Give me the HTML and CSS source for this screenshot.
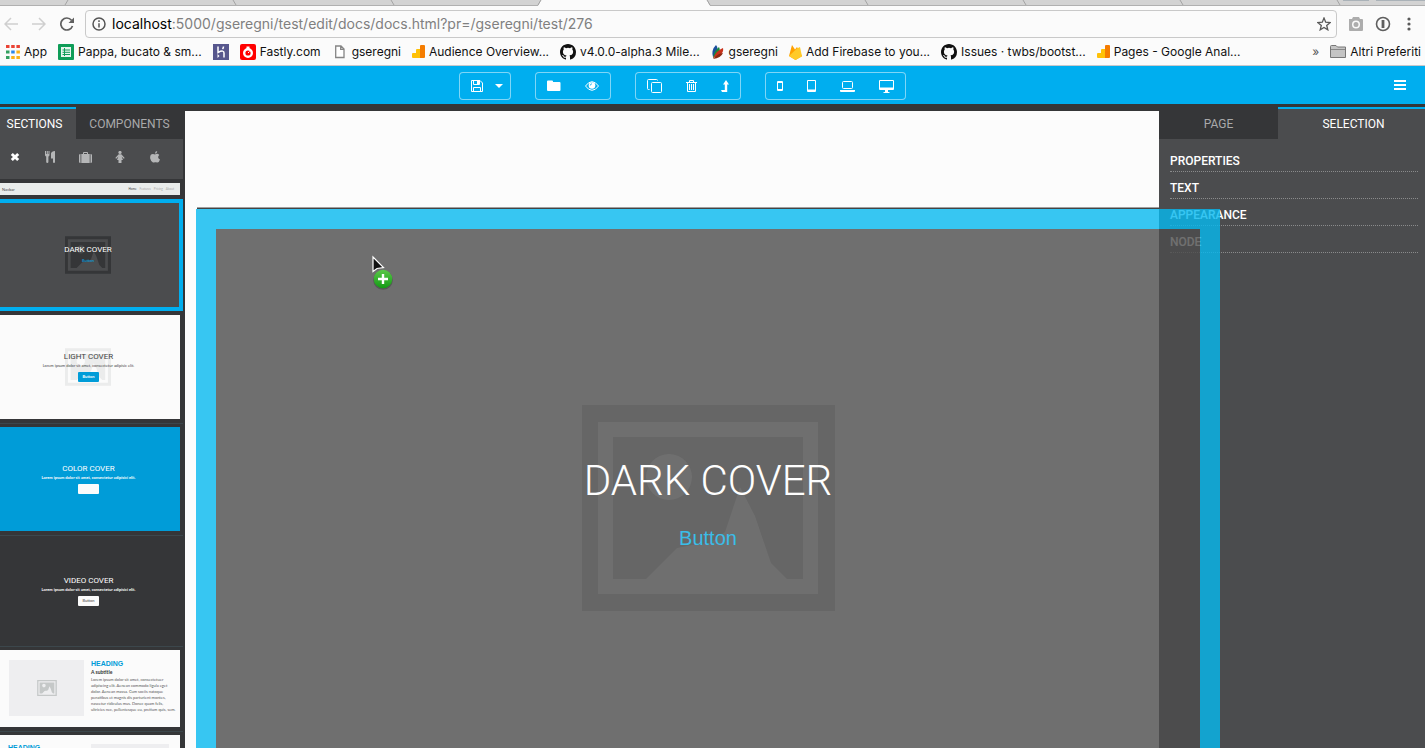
FILE: index.html
```html
<!DOCTYPE html>
<html lang="en">
<head>
<meta charset="utf-8">
<title>docs.html</title>
<link rel="stylesheet" href="styles.css">
</head>
<body>
<svg class="defs" aria-hidden="true">
  <symbol id="picture" viewBox="0 0 253 206"><path fill="currentColor" fill-rule="evenodd" d="M0 0H253V206H0ZM16 17V189H236V17ZM31 32H221V174H205L189 158L173 111L158 82L143 127L128 138L110 140L95 143L64 174H31ZM64 72A23 23 0 1 0 110 72A23 23 0 1 0 64 72Z"/></symbol>
  <symbol id="github" viewBox="0 0 16 16"><path fill="#111" d="M8 0C3.58 0 0 3.58 0 8c0 3.54 2.29 6.53 5.47 7.59.4.07.55-.17.55-.38 0-.19-.01-.82-.01-1.49-2.01.37-2.53-.49-2.69-.94-.09-.23-.48-.94-.82-1.13-.28-.15-.68-.52-.01-.53.63-.01 1.08.58 1.23.82.72 1.21 1.87.87 2.33.66.07-.52.28-.87.51-1.07-1.78-.2-3.64-.89-3.64-3.95 0-.87.31-1.59.82-2.15-.08-.2-.36-1.02.08-2.12 0 0 .67-.21 2.2.82a7.5 7.5 0 0 1 4 0c1.53-1.04 2.2-.82 2.2-.82.44 1.1.16 1.92.08 2.12.51.56.82 1.27.82 2.15 0 3.07-1.87 3.75-3.65 3.95.29.25.54.73.54 1.48 0 1.07-.01 1.93-.01 2.2 0 .21.15.46.55.38A8.01 8.01 0 0 0 16 8c0-4.42-3.58-8-8-8z"/></symbol>
  <symbol id="analytics" viewBox="0 0 13 13"><path fill="#ffc107" d="M0 9Q0 8 1 8H4V5Q4 4 5 4H8V13H1Q0 13 0 12Z"/><path fill="#f57c00" d="M8 1Q8 0 9 0H12Q13 0 13 1V12Q13 13 12 13H8Z"/></symbol>
</svg>

<div class="browser">
  <svg class="tabstrip" viewBox="0 0 1425 6" preserveAspectRatio="none" aria-hidden="true">
    <rect width="1425" height="6" fill="#d3d3d3"/>
    <path d="M0 5.500H538L541 0M707 0L710 5.500H1425" fill="none" stroke="#b0b0b0"/>
    <path d="M538 6L541 0H707L710 6Z" fill="#fbfbfb"/>
    <path d="M65 5L68 0M233 0L236 5M391 0L394 5M538 5L541 0M707 0L710 5M865 0L868 5M1023 0L1026 5M1180 0L1183 5M1337 0L1340 5" fill="none" stroke="#a4a4a4"/>
    <path d="M1343 0.500H1369M1376 0.500H1425" stroke="#aab2b8"/>
  </svg>
  <div class="address-row">
    <div class="history">
      <button class="bare" aria-label="Back"><svg width="14" height="14" viewBox="0 0 14 14" fill="none" stroke="#cfcfcf" stroke-width="1.500"><path d="M14 7H1.500M7 1L1 7L7 13"/></svg></button>
      <button class="bare" aria-label="Forward"><svg width="14" height="14" viewBox="0 0 14 14" fill="none" stroke="#cfcfcf" stroke-width="1.500"><path d="M0 7H12.500M7 1L13 7L7 13"/></svg></button>
      <button class="bare" aria-label="Reload"><svg width="14" height="14" viewBox="0 0 14 14"><path d="M12.500 9A6 6 0 1 1 11.500 3.200" fill="none" stroke="#606060" stroke-width="1.700"/><path d="M14 .5V6H8.500Z" fill="#606060"/></svg></button>
    </div>
    <div class="address">
      <svg width="14" height="14" viewBox="0 0 14 14"><circle cx="7" cy="7" r="6" fill="none" stroke="#555" stroke-width="1.500"/><path d="M7 6.200V10.500M7 3.300V5" stroke="#555" stroke-width="1.500"/></svg>
      <div class="url" role="textbox" contenteditable="true" spellcheck="false" aria-label="Address"><span class="host">localhost</span>:5000/gseregni/test/edit/docs/docs.html?pr=/gseregni/test/276</div>
      <button class="bare" aria-label="Bookmark"><svg width="14" height="14" viewBox="0 0 14 14"><path d="M7 1L8.700 5.200L13.200 5.500L9.700 8.400L10.800 12.800L7 10.400L3.200 12.800L4.300 8.400L.8 5.500L5.300 5.200Z" fill="none" stroke="#5a5a5a" stroke-width="1.300"/></svg></button>
    </div>
    <button class="bare" aria-label="Screenshot"><svg width="16" height="14" viewBox="0 0 16 14"><path fill="#adadad" fill-rule="evenodd" d="M1 2H4L5 0H11L12 2H14Q15 2 15 3V13Q15 14 14 14H2Q1 14 1 13ZM8 3.500A4 4 0 1 0 8 11.500A4 4 0 1 0 8 3.500ZM8 5A2.500 2.500 0 1 1 8 10A2.500 2.500 0 1 1 8 5Z"/></svg></button>
    <button class="bare" aria-label="Passwords"><svg width="16" height="16" viewBox="0 0 16 16"><circle cx="8" cy="8" r="6.500" fill="none" stroke="#5f5f5f" stroke-width="1.600"/><path d="M8 4V12" stroke="#5f5f5f" stroke-width="2.800"/></svg></button>
    <button class="bare" aria-label="Menu"><svg width="14" height="14" viewBox="0 0 14 14" fill="#5a5a5a"><circle cx="7" cy="2" r="1.600"/><circle cx="7" cy="7" r="1.600"/><circle cx="7" cy="12" r="1.600"/></svg></button>
  </div>
  <nav class="bookmarks" aria-label="Bookmarks">
    <a href="#"><svg width="14" height="14" viewBox="0 0 14 14"><path fill="#ea4335" d="M0 0h3.500v3H0zM5.200 0h3.500v3H5.200zM10.400 0h3.500v3h-3.500z"/><path fill="#34a060" d="M0 5.500h3.500v3H0zM0 11h3.500v3H0z"/><path fill="#2d87e8" d="M5.200 5.500h3.500v3H5.200z"/><path fill="#fbb117" d="M10.400 5.500h3.500v3h-3.500zM5.200 11h3.500v3H5.200zM10.400 11h3.500v3h-3.500z"/></svg>App</a>
    <a href="#"><svg width="16" height="16" viewBox="0 0 16 16"><rect width="16" height="16" rx="1" fill="#0f9d58"/><path d="M3 3H13V13H3Z" fill="#e7f5ee"/><path d="M4.500 6H12M4.500 8.300H12M4.500 10.500H12M6.500 4V12" stroke="#0f9d58"/></svg>Pappa, bucato &amp; sm...</a>
    <a href="#" aria-label="Heroku"><svg width="16" height="16" viewBox="0 0 16 16"><rect width="16" height="16" fill="#57578d"/><path d="M5 2.500V8.500Q11 5.500 11 9V13.500M10.500 2.500Q10.500 4 9.500 5" fill="none" stroke="#fff" stroke-width="1.500"/><path d="M4.500 10L6.500 12L4.500 14Z" fill="#fff"/></svg></a>
    <a href="#"><svg width="16" height="16" viewBox="0 0 16 16"><rect width="16" height="16" rx="2" fill="#f00"/><circle cx="8" cy="9" r="3.800" fill="none" stroke="#fff" stroke-width="2.400"/><path d="M6.500 2.500H9.500V5H6.500Z" fill="#fff"/><path d="M8 9L9.500 7.500" stroke="#fff"/></svg>Fastly.com</a>
    <a href="#"><svg width="16" height="14" viewBox="0 0 16 14"><path d="M3.700 1H9L12 4V12.500H3.700ZM8.700 1V4.300H12" fill="#fff" stroke="#858585" stroke-width="1.300"/></svg>gseregni</a>
    <a href="#"><svg width="13" height="13"><use href="#analytics"/></svg>Audience Overview...</a>
    <a href="#"><svg width="16" height="16"><use href="#github"/></svg>v4.0.0-alpha.3 Mile...</a>
    <a href="#"><svg width="14" height="14" viewBox="0 0 14 14"><path fill="#1b4f9c" d="M2 12Q0 5 5 0Q8 3 5 9Z"/><path fill="#178a3b" d="M2 13Q3 6 8 2Q10 6 7 10Z"/><path fill="#c8321b" d="M2 13Q6 5 12 3Q13 7 9 10Z"/><path fill="#8b2a10" d="M2 14Q7 8 12 8Q10 13 2 14Z"/></svg>gseregni</a>
    <a href="#"><svg width="13" height="16" viewBox="0 0 13 16"><path fill="#ffa000" d="M0 12L3 1L6 5.500L8 3L13 12L6.500 16Z"/><path fill="#ffca28" d="M0 12L8 4.500L11 3L13 12.500L6.500 16Z"/></svg>Add Firebase to you...</a>
    <a href="#"><svg width="16" height="16"><use href="#github"/></svg>Issues · twbs/bootst...</a>
    <a href="#"><svg width="13" height="13"><use href="#analytics"/></svg>Pages - Google Anal...</a>
    <button class="bare more" aria-label="More bookmarks">»</button>
    <a class="folder" href="#"><svg width="16" height="13" viewBox="0 0 16 13"><path d="M.5 12.500V1.500Q.5 .5 1.500 .5H6L7.500 2H15.500V12.500Z" fill="#c4c4c4" stroke="#777"/><path d="M1 4.500H15" stroke="#888"/></svg>Altri Preferiti</a>
  </nav>
</div>

<header class="toolbar">
  <div class="groups">
    <div class="group">
      <button aria-label="Save"><svg width="12" height="12" viewBox="0 0 12 12" fill="none" stroke="#fff"><path d="M.5 .5H9L11.500 3V11.500H.5ZM2.500 .5V4.500H8.500V.5M2.500 11.500V7.500H9.500V11.500"/><path d="M6 1H8V4H6Z" fill="#fff" stroke="none"/></svg></button>
      <button class="narrow" aria-label="Save options"><svg width="8" height="4" viewBox="0 0 8 4"><path d="M0 0H8L4 4Z" fill="#fff"/></svg></button>
    </div>
    <div class="group">
      <button aria-label="Open"><svg width="14" height="12" viewBox="0 0 14 12"><path d="M0 1.500Q0 .5 1 .5H5Q6 .5 6 1.500V2H12.500Q13.500 2 13.500 3V10Q13.500 11 12.500 11H1Q0 11 0 10Z" fill="#fff"/></svg></button>
      <button aria-label="Preview"><svg width="14" height="10" viewBox="0 0 14 10"><path d="M.5 5Q3.500 .7 7 .7T13.500 5Q10.500 9.300 7 9.300T.5 5Z" fill="none" stroke="#fff"/><circle cx="7" cy="4.500" r="3.300" fill="#fff"/><path d="M5.300 4.500A1.700 1.700 0 0 1 7 2.800" fill="none" stroke="#00aeef" stroke-width=".8"/></svg></button>
    </div>
    <div class="group">
      <button aria-label="Duplicate"><svg width="15" height="14" viewBox="0 0 15 14" fill="none" stroke="#fff"><rect x="4.500" y="3.500" width="10" height="10" rx="1"/><path d="M2.500 10.500H1.500Q.5 10.500 .5 9.500V1.500Q.5 .5 1.500 .5H9.500Q10.500 .5 10.500 1.500"/></svg></button>
      <button aria-label="Delete"><svg width="11" height="12" viewBox="0 0 11 12" fill="none" stroke="#fff"><path d="M0 2.500H11M3.500 2.500V.5H7.500V2.500M1.500 2.500V11.500H9.500V2.500M3.500 4V10M5.500 4V10M7.500 4V10"/></svg></button>
      <button aria-label="Select parent"><svg width="8" height="12" viewBox="0 0 8 12"><path d="M5 0L8 4.500H6.200V12H1L0 10H3.800V4.500H2Z" fill="#fff"/></svg></button>
    </div>
    <div class="group">
      <button aria-label="Phone"><svg width="6" height="10" viewBox="0 0 6 10"><path fill="#fff" fill-rule="evenodd" d="M1 0H5Q6 0 6 1V9Q6 10 5 10H1Q0 10 0 9V1Q0 0 1 0ZM1 2V8H5V2Z"/></svg></button>
      <button aria-label="Tablet"><svg width="9" height="12" viewBox="0 0 9 12"><path fill="#fff" fill-rule="evenodd" d="M1 0H8Q9 0 9 1V11Q9 12 8 12H1Q0 12 0 11V1Q0 0 1 0ZM1 1V9.500H8V1Z"/></svg></button>
      <button aria-label="Laptop"><svg width="15" height="11" viewBox="0 0 15 11"><rect x="2.500" y=".5" width="10" height="7" rx="1" fill="none" stroke="#fff"/><path d="M0 9H15V10Q15 11 14 11H1Q0 11 0 10Z" fill="#fff"/></svg></button>
      <button aria-label="Desktop"><svg width="15" height="13" viewBox="0 0 15 13"><path fill="#fff" fill-rule="evenodd" d="M1 0H14Q15 0 15 1V9Q15 10 14 10H9V12H10.500V13H4.500V12H6V10H1Q0 10 0 9V1Q0 0 1 0ZM1 1V7.500H14V1Z"/></svg></button>
    </div>
  </div>
  <button class="bare hamburger" aria-label="Menu"><svg width="12" height="10" viewBox="0 0 12 10"><path d="M0 0H12V2H0ZM0 4H12V6H0ZM0 8H12V10H0Z" fill="#fff"/></svg></button>
</header>

<main class="workspace">
  <aside class="library">
    <div class="tabs">
      <button class="tab active">SECTIONS</button>
      <button class="tab">COMPONENTS</button>
    </div>
    <div class="filters">
      <button class="bare on" aria-label="All"><svg width="10" height="10" viewBox="0 0 10 10"><path d="M1.800 2L8.200 8M8.200 2L1.800 8" stroke="currentColor" stroke-width="3"/></svg></button>
      <button class="bare" aria-label="Food"><svg width="10" height="12" viewBox="0 0 10 12" fill="currentColor"><path d="M0 0H1V3H1.700V0H2.800V3H3.500V0H4.500V4Q4.500 5 3.400 5.500V11Q3.300 12 2.300 12T1.200 11V5.500Q0 5 0 4ZM10 0V11Q10 12 9 12T8 11V7.500H6V2.500Q6.500 0 10 0Z"/></svg></button>
      <button class="bare" aria-label="Travel"><svg width="13" height="11" viewBox="0 0 13 11" fill="currentColor"><path d="M0 3Q0 2 1.500 2V11Q0 11 0 10ZM13 3Q13 2 11.500 2V11Q13 11 13 10ZM2.300 2H4V.8Q4 0 5 0H8Q9 0 9 .8V2H10.700V11H2.300ZM5 1V2H8V1Z" fill-rule="evenodd"/></svg></button>
      <button class="bare" aria-label="People"><svg width="10" height="12" viewBox="0 0 10 12" fill="currentColor"><circle cx="5" cy="1.500" r="1.600"/><path d="M3.700 3.300H6.300L9.700 7L8.800 7.700L6.600 5.500L8 9H6.500V12H3.500V9H2L3.400 5.500L1.200 7.700L.3 7Z"/></svg></button>
      <button class="bare" aria-label="Apple"><svg width="10" height="12" viewBox="0 0 10 12" fill="currentColor"><path d="M7.200 0Q7.300 2.500 4.900 2.700Q5 .3 7.200 0ZM5 3.500Q7.500 2 9.300 4Q7.900 5 8.200 6.600T10 8.500Q9 11.500 7.500 11.500Q6 11 5 11.200T3 11.500Q1 11 .2 7.500Q-.3 3 3 3Q4 3 5 3.500Z"/></svg></button>
    </div>
    <div class="thumbs">
      <div class="item"><div class="thumb navbar"><span>Navbar</span><span class="links"><b>Home</b><i>Features</i><i>Pricing</i><i>About</i></span></div></div>
      <div class="item selected"><div class="thumb cover dark"><svg class="backdrop"><use href="#picture"/></svg><h3>DARK COVER</h3><a href="#">Button</a></div></div>
      <div class="item"><div class="thumb cover light"><svg class="backdrop"><use href="#picture"/></svg><h3>LIGHT COVER</h3><p>Lorem ipsum dolor sit amet, consectetur adipisic elit.</p><button>Button</button></div></div>
      <div class="item"><div class="thumb cover color"><h3>COLOR COVER</h3><p>Lorem ipsum dolor sit amet, consectetur adipisici elit.</p><button aria-label="Button"></button></div></div>
      <div class="item"><div class="thumb cover video"><h3>VIDEO COVER</h3><p>Lorem ipsum dolor sit amet, consectetur adipisici elit.</p><button>Button</button></div></div>
      <div class="item"><div class="thumb media"><div class="image"><svg width="20" height="16"><use href="#picture"/></svg></div><div class="copy"><h4>HEADING</h4><h5>A subtitle</h5><p>Lorem ipsum dolor sit amet, consectetuer<br>adipiscing elit. Aenean commodo ligula eget<br>dolor. Aenean massa. Cum sociis natoque<br>penatibus et magnis dis parturient montes,<br>nascetur ridiculus mus. Donec quam felis,<br>ultricies nec, pellentesque eu, pretium quis, sem.</p></div></div></div>
      <div class="item"><div class="thumb media flipped"><div class="copy"><h4>HEADING</h4></div><div class="image"></div></div></div>
    </div>
  </aside>

  <section class="canvas"><div class="drop-line"></div></section>

  <aside class="inspector">
    <div class="tabs">
      <button class="tab page">PAGE</button>
      <button class="tab active">SELECTION</button>
    </div>
    <div class="rows">
      <button>PROPERTIES</button>
      <button>TEXT</button>
      <button>APPEARANCE</button>
      <button>NODE</button>
    </div>
  </aside>

  <div class="ghost">
    <svg class="backdrop"><use href="#picture"/></svg>
    <h1>DARK COVER</h1>
    <a href="#">Button</a>
  </div>
  <svg class="cursor" width="22" height="36" viewBox="0 0 22 36" aria-hidden="true">
    <defs><linearGradient id="green" x2="0" y2="1"><stop offset="0" stop-color="#5cc84a"/><stop offset="1" stop-color="#129a14"/></linearGradient></defs>
    <circle cx="11" cy="25" r="9.800" fill="#333" opacity=".4"/>
    <circle cx="11" cy="24" r="9.300" fill="url(#green)"/>
    <path d="M11 19V29M6 24H16" stroke="#fff" stroke-width="2.400"/>
    <path d="M1 2V16.500L5 13.500L11.500 12.500Z" fill="#111" stroke="#fff" stroke-width="1.200"/>
  </svg>
</main>
</body>
</html>
```
FILE: styles.css
```css
* { box-sizing: border-box; }
body {
  margin: 0;
  height: 100vh;
  display: flex;
  flex-direction: column;
  overflow: hidden;
  background: #353638;
  font-family: Roboto, "Liberation Sans", sans-serif;
}
h1, h3, h4, h5, p { margin: 0; }
a { color: inherit; text-decoration: none; }
button { font: inherit; color: inherit; cursor: pointer; }
svg { display: block; flex: none; }
.defs { position: absolute; width: 0; height: 0; }
.bare { display: flex; align-items: center; justify-content: center; padding: 0; border: 0; background: none; }

/* Browser window */
.browser { flex: none; background: #fbfbfb; border-bottom: 1px solid #c8c8cc; }
.tabstrip { width: 100%; height: 6px; }
.address-row { display: flex; align-items: center; gap: 11px; padding: 4px 9px 0 4px; }
.history { display: flex; gap: 14px; }
.address {
  flex: 1;
  display: flex;
  align-items: center;
  gap: 6px;
  height: 28px;
  padding: 0 5px 0 6px;
  border: 1px solid #c9c9c9;
  border-radius: 4px;
}
.url { flex: 1; font-family: Inter, Roboto, sans-serif; font-size: 14px; line-height: 20px; color: #808080; outline: 0; white-space: nowrap; }
.host { color: #000; }
.bookmarks {
  display: flex;
  align-items: center;
  gap: 11px;
  height: 27px;
  padding: 0 4px 0 6px;
  font-family: Inter, Roboto, sans-serif;
  font-size: 12px;
  color: #111;
  white-space: nowrap;
}
.bookmarks a { display: flex; align-items: center; gap: 4px; }
.more { margin-left: auto; color: #555; }

/* Editor toolbar */
.toolbar {
  flex: none;
  display: grid;
  grid-template-columns: 1fr 42px;
  align-items: center;
  height: 38px;
  padding-right: 19px;
  background: #00aeef;
}
.groups { display: flex; justify-content: center; gap: 24px; padding-top: 2px; }
.group { display: flex; height: 28px; border-radius: 4px; box-shadow: inset 0 0 0 1px #7fd6f7; }
.group button {
  display: flex;
  align-items: center;
  justify-content: center;
  padding: 0 12px;
  border: 0;
  background: none;
}
.group .narrow { padding: 0 8px 0 0; }
.hamburger { justify-content: flex-end; height: 28px; }

/* Workspace */
.workspace { position: relative; flex: 1; min-height: 0; display: flex; padding-top: 3px; }
.tabs { display: flex; height: 32px; }
.tab {
  flex: 1;
  padding: 0;
  border: 0;
  border-top: 2px solid transparent;
  background: #353638;
  color: #a9a9aa;
  font-size: 12px;
  line-height: 14px;
}
.tab.active { border-top-color: #00aeef; background: #4b4c4e; color: #fff; }

.library { flex: none; width: 185px; padding-right: 2px; overflow: hidden; }
.library .active { flex: 0 0 76px; padding-right: 7px; }
.filters { display: flex; gap: 5px; height: 40px; padding-bottom: 4px; background: #4b4c4e; color: #b5b6b7; }
.filters button { width: 30px; }
.filters .on { color: #fff; }

.item { border: 4px solid transparent; border-left: 0; box-shadow: 0 1px #3c474c; }
.item.selected { border-color: #00aeef; box-shadow: none; }
.thumb { width: 180px; font-family: Lato, "Liberation Sans", sans-serif; }
.selected .thumb { width: 100%; }
.navbar { display: flex; justify-content: space-between; align-items: center; height: 12px; padding: 0 6px 0 2px; background: #e9eceb; color: #444; font-size: 4px; }
.links { display: flex; gap: 3px; font-size: 3px; }
.links b { font-weight: 400; }
.links i { font-style: normal; color: #aaa; }

.cover { position: relative; display: flex; flex-direction: column; align-items: center; justify-content: center; gap: 2px; height: 104px; padding-right: 3px; }
.cover h3 { position: relative; font: 400 8px/10px Roboto, sans-serif; }
.cover p { position: relative; font-size: 4px; line-height: 4px; white-space: nowrap; }
.cover a { position: relative; font-size: 4px; line-height: 8px; color: #00aeef; }
.cover button { position: relative; width: 21px; height: 10px; margin-top: 2px; padding: 0; border: 0; border-radius: 1px; background: #fbfbfb; color: #444; font-size: 4px; line-height: 10px; }
.cover .backdrop { position: absolute; top: 33px; left: 65px; width: 46px; height: 38px; }
.dark { background: #4b4c4e; color: #fff; }
.dark .backdrop { color: #353638; }
.light { background: #fbfbfb; color: #444; }
.light .backdrop { color: #ebecec; }
.cover.light button { background: #009cd8; color: #fff; font-weight: 700; }
.color { background: #009cd8; color: #fff; }
.color p, .video p { font-weight: 700; }
.video { height: 103px; color: #fff; }

.media { display: flex; gap: 7px; height: 77px; padding: 10px 8px 10px 9px; background: #fbfbfb; color: #555; }
.image { display: flex; align-items: center; justify-content: center; flex: 0 0 75px; height: 56px; background: #eeeef0; color: #c5c8c8; }
.copy { flex: 1; white-space: nowrap; }
.copy h4 { font: 700 7px/8px "Liberation Sans", Arial, sans-serif; color: #009cd8; }
.copy h5 { font-size: 5px; line-height: 9px; color: #333; }
.copy p { font-size: 4px; line-height: 6px; }
.flipped { padding: 9px 11px 10px 8px; }
.flipped .image { flex-basis: 78px; }

.canvas { flex: 1; margin-top: 4px; padding: 96px 0 0 12px; background: #fcfcfc; }
.drop-line { height: 2px; border-top: 1px solid #a0a0a0; background: #444; }

.inspector { flex: none; width: 266px; background: #4b4c4e; color: #fff; }
.inspector .page { flex: 0 0 119px; }
.inspector .active { padding-left: 4px; }
.rows { padding: 6px 7px 0 11px; }
.rows button {
  display: block;
  width: 100%;
  height: 27px;
  padding: 5px 0 0;
  border: 0;
  border-bottom: 1px dotted #8a8b8c;
  background: none;
  text-align: left;
  font-size: 12px;
  font-weight: 500;
  line-height: 14px;
}

/* Section being dragged */
.ghost {
  position: absolute;
  top: 105px;
  left: 196px;
  width: 1024px;
  height: 598px;
  display: flex;
  flex-direction: column;
  align-items: center;
  justify-content: center;
  gap: 20px;
  padding-bottom: 10px;
  border: 20px solid #06b9f0;
  background: #4d4d4d;
  color: #fff;
  opacity: .8;
}
.ghost h1 { position: relative; font-size: 42px; font-weight: 300; line-height: 50px; }
.ghost a { position: relative; font: 20px/24px "Liberation Sans", Arial, sans-serif; color: #0aaee4; }
.ghost .backdrop { position: absolute; top: 176px; left: 366px; width: 253px; height: 206px; color: #414141; }
.cursor { position: absolute; top: 151px; left: 372px; }
```
